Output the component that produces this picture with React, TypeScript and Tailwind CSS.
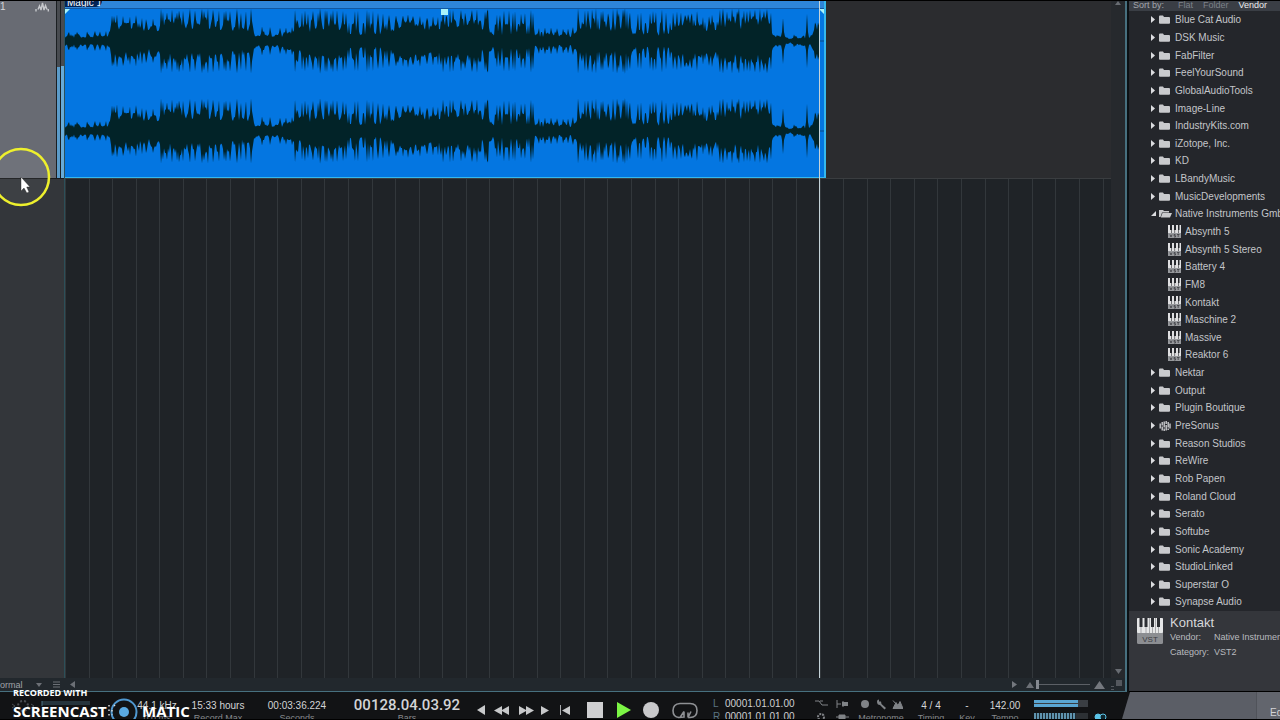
import type { ReactNode } from "react"

type Segment = { from: number; to: number; core: number; peak: number }

// Loudness sections of the audio clip, in clip pixels
const segments: Segment[] = [
  { from: 0, to: 46, core: 5, peak: 10 },
  { from: 46, to: 76, core: 17, peak: 27 },
  { from: 76, to: 96, core: 12, peak: 24 },
  { from: 96, to: 150, core: 18, peak: 33 },
  { from: 150, to: 188, core: 13, peak: 33 },
  { from: 188, to: 229, core: 6, peak: 15 },
  { from: 229, to: 250, core: 13, peak: 32 },
  { from: 250, to: 282, core: 17, peak: 33 },
  { from: 282, to: 318, core: 8, peak: 32 },
  { from: 318, to: 332, core: 13, peak: 28 },
  { from: 332, to: 356, core: 19, peak: 27 },
  { from: 356, to: 374, core: 15, peak: 25 },
  { from: 374, to: 412, core: 19, peak: 32 },
  { from: 412, to: 426, core: 13, peak: 33 },
  { from: 426, to: 470, core: 8, peak: 32 },
  { from: 470, to: 512, core: 6, peak: 14 },
  { from: 512, to: 566, core: 15, peak: 33 },
  { from: 566, to: 608, core: 8, peak: 32 },
  { from: 608, to: 636, core: 18, peak: 30 },
  { from: 636, to: 654, core: 13, peak: 27 },
  { from: 654, to: 707, core: 18, peak: 33 },
  { from: 707, to: 722, core: 5, peak: 7 },
  { from: 722, to: 728, core: 2, peak: 3 },
  { from: 728, to: 749, core: 4, peak: 7 },
  { from: 749, to: 756, core: 15, peak: 20 },
]

const transients = [
  4, 12, 22, 30, 35, 41, 47, 49, 52, 58, 65, 71, 77, 81, 88, 96, 98, 102, 107, 112, 114, 118, 125, 130, 137, 139, 143,
  148, 154, 159, 161, 165, 172, 176, 181, 186, 188, 197, 205, 215, 221, 227, 230, 237, 240, 243, 248, 253, 255, 260,
  262, 266, 268, 272, 278, 281, 290, 293, 302, 304, 308, 313, 318, 324, 331, 338, 343, 348, 355, 362, 368, 373, 378,
  385, 388, 396, 400, 407, 412, 420, 422, 423, 432, 435, 439, 444, 448, 450, 456, 460, 466, 468, 474, 480, 486, 492,
  498, 503, 508, 513, 520, 523, 527, 531, 536, 538, 543, 548, 552, 554, 558, 560, 562, 565, 573, 576, 585, 588, 591,
  597, 601, 608, 612, 616, 620, 623, 627, 632, 638, 644, 647, 655, 658, 662, 667, 672, 674, 679, 682, 685, 690, 695,
  699, 702, 706, 729, 750, 753,
]

const soloHits: Record<number, number> = { 718: 23, 742: 27 }

const noise = (n: number) => {
  const v = Math.sin(n * 12.9898) * 43758.5453
  return v - Math.floor(v)
}

const segmentAt = (x: number) => segments.find((s) => x >= s.from && x < s.to) ?? segments[segments.length - 1]

const coreAt = (x: number) => {
  let sum = 0
  for (let d = -3; d <= 3; d++) sum += segmentAt(Math.max(0, x + d)).core
  return sum / 7
}

const level = (x: number, seed: number) => {
  const { peak } = segmentAt(x)
  const core = coreAt(x) * (0.65 + 0.45 * noise(x * 3 + seed))
  const room = Math.max(0, peak - core)
  if (soloHits[x]) return soloHits[x]
  if (soloHits[x - 1] || soloHits[x + 1]) return 9
  if (transients.includes(x)) return core + room * (0.75 + 0.25 * noise(x))
  if (transients.includes(x - 1) || transients.includes(x + 1)) return core + room * 0.5 * noise(x + 7)
  return noise(x + 31) > 0.75 ? core + room * 0.4 : core
}

const channelPath = (center: number) => {
  const xs = Array.from({ length: 755 }, (_, i) => i)
  const top = xs.map((x) => `L${x} ${(center - level(x, 0)).toFixed(1)}`)
  const bottom = xs.reverse().map((x) => `L${x} ${(center + level(x, 1)).toFixed(1)}`)
  return `M0 ${center}${top.join("")}${bottom.join("")}Z`
}

type Row = { name: string; kind?: "folder" | "open" | "plugin" | "presonus" }

const rows: Row[] = [
  { name: "Blue Cat Audio" },
  { name: "DSK Music" },
  { name: "FabFilter" },
  { name: "FeelYourSound" },
  { name: "GlobalAudioTools" },
  { name: "Image-Line" },
  { name: "IndustryKits.com" },
  { name: "iZotope, Inc." },
  { name: "KD" },
  { name: "LBandyMusic" },
  { name: "MusicDevelopments" },
  { name: "Native Instruments GmbH", kind: "open" },
  { name: "Absynth 5", kind: "plugin" },
  { name: "Absynth 5 Stereo", kind: "plugin" },
  { name: "Battery 4", kind: "plugin" },
  { name: "FM8", kind: "plugin" },
  { name: "Kontakt", kind: "plugin" },
  { name: "Maschine 2", kind: "plugin" },
  { name: "Massive", kind: "plugin" },
  { name: "Reaktor 6", kind: "plugin" },
  { name: "Nektar" },
  { name: "Output" },
  { name: "Plugin Boutique" },
  { name: "PreSonus", kind: "presonus" },
  { name: "Reason Studios" },
  { name: "ReWire" },
  { name: "Rob Papen" },
  { name: "Roland Cloud" },
  { name: "Serato" },
  { name: "Softube" },
  { name: "Sonic Academy" },
  { name: "StudioLinked" },
  { name: "Superstar O" },
  { name: "Synapse Audio" },
]

function Triangle({ dir, className }: { dir: "up" | "down" | "left" | "right"; className: string }) {
  const points = { up: "5,0 10,10 0,10", down: "0,0 10,0 5,10", left: "10,0 10,10 0,5", right: "0,0 10,5 0,10" }[dir]
  return (
    <svg viewBox="0 0 10 10" preserveAspectRatio="none" className={className} fill="currentColor">
      <polygon points={points} />
    </svg>
  )
}

function FolderIcon({ open }: { open?: boolean }) {
  return open ? (
    <svg viewBox="0 0 13 9" className="h-[9px] w-[13px] shrink-0" fill="#c9cacd">
      <path d="M0 1h4l1 1h5v1.500H3L1.500 8H0ZM3.500 4H13l-2 4.500H1.800Z" />
    </svg>
  ) : (
    <svg viewBox="0 0 11 9" className="h-[9px] w-[11px] shrink-0" fill="#c9cacd">
      <path d="M0 1.500Q0 .5 1 .5h3l1 1.500h5q1 0 1 1V8q0 .8-1 .8H1Q0 8.800 0 8Z" />
    </svg>
  )
}

function PresonusIcon() {
  return (
    <svg viewBox="0 0 12 10" className="h-[10px] w-[12px] shrink-0" stroke="#c9cacd" strokeWidth="1.400" fill="none">
      <path d="M1.200 2.500v5M3.200 1v3.500M3.200 5.500v4M5.200.5v6M5.200 7.500V10M7.200 0v3M7.200 4v5.500M9.200 1v5.500M9.200 7.500V9M11 2.500v5" />
    </svg>
  )
}

function PluginIcon() {
  return (
    <svg viewBox="0 0 13 13" className="h-[13px] w-[13px] shrink-0">
      <path d="M0 0h13v8H0Z" fill="#e0e0e2" />
      <path d="M0 8h13v5H0Z" fill="#96989c" />
      <path d="M2 0h2v5H2ZM6 0h2v5H6ZM10 0h1.500v5H10ZM3 5h.6v3H3ZM6.500 5h.6v3h-.6ZM10 5h.6v3H10Z" fill="#24262b" />
      <path d="M2 9.500l1 2.500 1-2.500M7.500 9.500h-1.500v1.200h1.500V12H6M9 9.500h2.500M10.200 9.500V12" stroke="#3c3e43" fill="none" strokeWidth=".8" />
    </svg>
  )
}

function BrowserRow({ name, kind = "folder" }: Row) {
  if (kind === "plugin") {
    return (
      <button className="flex min-h-0 w-full flex-1 items-center gap-1 whitespace-nowrap pl-[39px] text-left">
        <PluginIcon />
        {name}
      </button>
    )
  }
  return (
    <button className="flex min-h-0 w-full flex-1 items-center whitespace-nowrap pl-[21px] text-left">
      <span className="flex w-[9px] shrink-0 pl-px">
        {kind === "open" ? (
          <svg viewBox="0 0 5 5" className="h-[5px] w-[5px]" fill="#dcdde0">
            <path d="M5 0v5H0Z" />
          </svg>
        ) : (
          <Triangle dir="right" className="h-[7px] w-1 text-[#dcdde0]" />
        )}
      </span>
      <span className="flex w-4 shrink-0">
        {kind === "presonus" ? <PresonusIcon /> : <FolderIcon open={kind === "open"} />}
      </span>
      {name}
    </button>
  )
}

function Browser() {
  return (
    <aside className="flex w-[151px] shrink-0 flex-col overflow-hidden border-b border-black bg-[#24262b] text-[10px] text-[#c3c5c9]">
      <div className="flex h-[10px] shrink-0 items-end gap-[10px] whitespace-nowrap bg-[#3a3e45] pl-1 text-[9px] leading-3 text-[#a3a6ac]">
        <span className="mr-1">Sort by:</span>
        <button className="text-[#7d8189]">Flat</button>
        <button className="text-[#7d8189]">Folder</button>
        <button className="text-[#eceded]">Vendor</button>
      </div>
      <div className="flex min-h-0 flex-1 flex-col">
        {rows.map((row) => (
          <BrowserRow key={row.name} {...row} />
        ))}
      </div>
      <div className="flex h-20 shrink-0 gap-[7px] bg-[#34363b] pl-2 pt-[7px]">
        <svg viewBox="0 0 26 26" className="h-[26px] w-[26px] shrink-0">
          <rect width="26" height="26" rx="1.500" fill="#8c8e92" />
          <rect width="26" height="15" rx="1" fill="#e6e7e8" />
          <path d="M2.500 0h3v9h-3ZM7.500 0h3v9h-3ZM14 0h3v9h-3ZM20 0h3v9h-3Z" fill="#2c2e33" />
          <path d="M4 9v6M9 9v6M12.500 0v15M18.500 0v15M15.500 9v6M21.500 9v6" stroke="#8c8e92" strokeWidth=".7" />
          <text x="13" y="23.500" textAnchor="middle" fontSize="8" fill="#3b3d42">VST</text>
        </svg>
        <div className="whitespace-nowrap text-[9px] leading-[15px] text-[#b9bbbf]">
          <h2 className="-mt-0.5 text-[13px] leading-[14px] text-[#d6d7da]">Kontakt</h2>
          <div className="grid grid-cols-[44px_auto]">
            <span>Vendor:</span>
            <span>Native Instruments</span>
            <span>Category:</span>
            <span>VST2</span>
          </div>
        </div>
      </div>
    </aside>
  )
}

function TrackHeader() {
  return (
    <div className="flex h-[178px] border-b border-[#1a1b1d] bg-[#686b73]">
      <div className="flex flex-1 justify-between pr-[7px] text-[10px] leading-3 text-[#d4d5d8]">
        <span>1</span>
        <svg viewBox="0 0 14 10" className="mt-px h-[10px] w-[14px]" stroke="#c6c8cc" strokeWidth="1.400" fill="none">
          <path d="M1 9.500V7M3 7.500L4.500 4 6 8M6 8l1.500-7L9 8M9 8l1.500-4.500L12 7.500M13.300 7v2.500" />
        </svg>
      </div>
      <div className="flex w-2 items-end gap-px bg-[#1b1f22] pl-px">
        <div className="flex h-full flex-1 items-end bg-[#484b50]">
          <div className="h-[111px] w-full bg-[#5c9cca]" />
        </div>
        <div className="flex h-full flex-1 items-end bg-[#484b50]">
          <div className="h-[112px] w-full bg-[#68abd8]" />
        </div>
      </div>
    </div>
  )
}

function GridLines() {
  return (
    <svg className="h-full w-full" fill="#32373b">
      {Array.from({ length: 100 }, (_, i) => (
        <rect key={i} x={Math.round(i * 23.58)} width="1" height="100%" />
      ))}
    </svg>
  )
}

function AudioClip() {
  return (
    <div className="flex h-full w-[761px] flex-col border-b border-r-2 border-[#35b8ee] bg-[#0476e1]">
      <div className="h-[8px] shrink-0 overflow-hidden border-b border-[#1257a0] bg-[#2e85d9]">
        <span className="block h-[6px] w-[37px] overflow-hidden whitespace-nowrap rounded-br-md bg-[#032456] pl-0.5 text-[10px] leading-[3px] text-white">
          Magic 1
        </span>
      </div>
      <svg viewBox="0 0 759 168" className="h-[168px] w-[759px]">
        <path d={channelPath(32)} fill="#022328" />
        <path d={channelPath(122)} fill="#022328" />
        <path d="M755 32h4M755 122h4" stroke="#0a4a86" />
        <path d="M0 0h5L0 5ZM754 0h5v5Z" fill="#a9f3fa" />
        <rect x="376" width="7" height="6" fill="#a9f3fa" />
      </svg>
    </div>
  )
}

function Timeline() {
  return (
    <div className="relative min-w-0 flex-1 overflow-hidden border-l border-[#2c5059] bg-[#1f2327]">
      <div className="h-[178px] border-b border-[#3a3d40] bg-[#2b2c2f]">
        <AudioClip />
      </div>
      <div className="absolute inset-x-0 bottom-0 top-[178px]">
        <GridLines />
      </div>
      <div className="absolute inset-y-0 left-[754px] w-px bg-[#c4d2d8]" />
    </div>
  )
}

function ScrollBar() {
  return (
    <div className="flex h-[13px] shrink-0 items-center bg-[#22282d] pr-[3px] text-[9px] text-[#a0a3a8]">
      <button className="flex w-[42px] items-center justify-between leading-3">
        ormal
        <Triangle dir="down" className="h-1 w-[6px] text-[#6c7076]" />
      </button>
      <svg viewBox="0 0 7 7" className="ml-[11px] h-[7px] w-[7px]" stroke="#6c7076">
        <path d="M0 1h7M0 3.500h7M0 6h7" />
      </svg>
      <button aria-label="Scroll left" className="ml-[10px]">
        <Triangle dir="left" className="h-[7px] w-[5px] text-[#6c7076]" />
      </button>
      <div className="flex-1" />
      <button aria-label="Scroll right">
        <Triangle dir="right" className="h-[7px] w-[5px] text-[#74787e]" />
      </button>
      <Triangle dir="up" className="ml-[9px] h-[6px] w-2 text-[#6c7076]" />
      <input
        type="range"
        aria-label="Horizontal zoom"
        defaultValue={0}
        className="mx-0.5 h-[9px] w-[54px] appearance-none bg-[linear-gradient(#5c6066,#5c6066)] bg-[length:100%_1px] bg-center bg-no-repeat [&::-webkit-slider-thumb]:h-[9px] [&::-webkit-slider-thumb]:w-[3px] [&::-webkit-slider-thumb]:appearance-none [&::-webkit-slider-thumb]:bg-[#858990]"
      />
      <Triangle dir="up" className="ml-0.5 h-2 w-[11px] text-[#74787e]" />
      <svg viewBox="0 0 11 10" className="ml-[6px] h-[10px] w-[11px]" fill="#54585e">
        <path d="M5 0h6v6H5ZM0 6h3v1H0ZM0 9h3v1H0Z" />
      </svg>
    </div>
  )
}

function Arranger() {
  return (
    <section className="flex min-w-0 flex-1 flex-col border-b border-r-2 border-[#47707f]">
      <div className="flex min-h-0 flex-1">
        <div className="w-16 shrink-0 bg-[#33363a]">
          <TrackHeader />
        </div>
        <Timeline />
        <div className="flex w-[14px] shrink-0 flex-col items-center justify-between bg-[#26292d] pb-1 text-[#686c72]">
          <Triangle dir="up" className="h-1 w-[6px]" />
          <Triangle dir="down" className="h-[5px] w-[7px]" />
        </div>
      </div>
      <ScrollBar />
    </section>
  )
}

function Readout({ value, label, className }: { value: string; label: string; className: string }) {
  return (
    <div className={`flex shrink-0 flex-col items-center whitespace-nowrap ${className}`}>
      <span className="leading-[17px] text-[#d3d4d6]">{value}</span>
      <span className="font-['Liberation_Sans',Arial,sans-serif] text-[9px] font-normal leading-[9px] text-[#85888c]">
        {label}
      </span>
    </div>
  )
}

function TransportButton({ label, className, children }: { label: string; className: string; children: ReactNode }) {
  return (
    <button aria-label={label} className={`mt-1 flex h-[18px] shrink-0 items-center justify-center ${className}`}>
      {children}
    </button>
  )
}

function Transport() {
  return (
    <div className="flex min-w-0 flex-1 overflow-hidden bg-[#121315] pt-[5px] text-[10px]">
      <div className="w-[127px] shrink-0 pl-3">
        <svg viewBox="0 0 84 20" className="h-5 w-[84px]" fill="none" stroke="#4a4d52">
          <circle cx="11" cy="9" r="5" strokeDasharray="2 2" strokeWidth="2" />
          <path d="M0 7l3 2-3 2M19 7l3 2-3 2" />
          <path d="M30 6h48" stroke="#26343c" strokeWidth="4" />
          <path d="M30 4v5" stroke="#4b7286" />
        </svg>
      </div>
      <Readout value="44.1 kHz" label="0.0 ms" className="w-[60px]" />
      <Readout value="15:33 hours" label="Record Max" className="w-[62px]" />
      <Readout value="00:03:36.224" label="Seconds" className="w-[96px]" />
      <Readout
        value="00128.04.03.92"
        label="Bars"
        className="w-[124px] font-[Roboto,sans-serif] text-[15px] font-medium"
      />
      <div className="flex shrink-0 text-[#c8c9cb]">
        <TransportButton label="Previous marker" className="w-6">
          <Triangle dir="left" className="h-[10px] w-2" />
        </TransportButton>
        <TransportButton label="Rewind" className="w-4">
          <Triangle dir="left" className="h-[9px] w-2 shrink-0" />
          <Triangle dir="left" className="-ml-px h-[9px] w-2 shrink-0" />
        </TransportButton>
        <TransportButton label="Forward" className="ml-2 w-[18px]">
          <Triangle dir="right" className="h-[9px] w-2" />
          <Triangle dir="right" className="-ml-px h-[9px] w-2" />
        </TransportButton>
        <TransportButton label="Next marker" className="ml-1 w-3">
          <Triangle dir="right" className="h-[9px] w-2" />
        </TransportButton>
        <TransportButton label="Return to zero" className="w-7">
          <span className="mr-px h-[10px] w-px bg-[#a9abae]" />
          <Triangle dir="left" className="h-[9px] w-2" />
        </TransportButton>
        <TransportButton label="Stop" className="w-8">
          <span className="h-4 w-4 bg-[#cfcfd1]" />
        </TransportButton>
        <TransportButton label="Play" className="w-[26px]">
          <Triangle dir="right" className="h-4 w-[14px] text-[#7cf545]" />
        </TransportButton>
        <TransportButton label="Record" className="w-7">
          <span className="h-4 w-4 rounded-full bg-[#c9c9cb]" />
        </TransportButton>
        <TransportButton label="Loop" className="w-10">
          <svg viewBox="0 0 26 17" className="h-[17px] w-[26px]" fill="none" stroke="#8e9094" strokeWidth="1.600">
            <path d="M7 15.500Q1 15 1 8.500T8 1.500h10Q25 1.500 25 8.500T18 15.500H16M6 15.500L12 15 12 9.500M12 9.500L8 15.500M16 15.500L19 9.500M16 15.500v-5" />
          </svg>
        </TransportButton>
      </div>
      <div className="ml-2 grid w-[102px] shrink-0 grid-cols-[12px_auto] content-start leading-[13px] text-[#cfd0d2]">
        <span className="text-[#5a7382]">L</span>
        <span>00001.01.01.00</span>
        <span className="text-[#5a7382]">R</span>
        <span>00001.01.01.00</span>
      </div>
      <svg viewBox="0 0 34 23" className="h-[23px] w-[34px] shrink-0" fill="#808387" stroke="#808387">
        <path d="M0 4h4l3 4h6M5 4h3M22 3v8M22 7h4M28 4v6M29 7h4" fill="none" />
        <path d="M27 5h6v4h-6Z" stroke="none" />
        <circle cx="6" cy="20" r="3" fill="none" strokeWidth="2" strokeDasharray="2 1" />
        <path d="M21 20h13M24 18h6v4h-6Z" />
      </svg>
      <div className="ml-1 flex w-[56px] shrink-0 flex-col items-center">
        <svg viewBox="0 0 44 17" className="h-[17px] w-[44px] shrink-0" fill="#808387">
          <circle cx="6" cy="7" r="4" />
          <path d="M18 4.500q0-2 2-2v2h2l.5 2.500L27 11l-1.500 1.500L21 8q-3 0-3-3.500Z" />
          <path d="M34 11.500l3-6 2 3 2-4 3 7ZM34 3.500l6 7" stroke="#808387" />
        </svg>
        <span className="text-[9px] leading-[9px] text-[#85888c]">Metronome</span>
      </div>
      <Readout value="4 / 4" label="Timing" className="ml-[2px] w-[40px]" />
      <Readout value="-" label="Key" className="w-[32px]" />
      <Readout value="142.00" label="Tempo" className="w-[44px]" />
      <div className="ml-[7px] w-[54px] shrink-0 pt-[3px]">
        <div className="h-[7px] bg-[#3a3e43]">
          <div className="flex h-full w-[44px] flex-col gap-px">
            <div className="flex-1 bg-[#5aa6d3]" />
            <div className="flex-1 bg-[#5aa6d3]" />
          </div>
        </div>
        <div className="mt-[6px] h-[7px] bg-[#2c3034]">
          <div className="h-full w-[42px] bg-[repeating-linear-gradient(90deg,#5f93ae_0_2px,#1c2a32_2px_3px)]" />
        </div>
      </div>
      <svg viewBox="0 0 14 10" className="ml-[6px] mt-4 h-[10px] w-[14px] shrink-0" stroke="#5cc4e8">
        <circle cx="4" cy="4" r="3" fill="#5cc4e8" />
        <circle cx="9" cy="4" r="3" fill="#10282f" />
      </svg>
    </div>
  )
}

function Watermark() {
  return (
    <div className="absolute bottom-0 left-[13px] font-['Open_Sans',sans-serif] font-bold text-white">
      <div className="text-[9px] leading-[10px]">RECORDED WITH</div>
      <div className="flex h-[21px] overflow-hidden text-[15px] leading-[26px]">
        <span className="w-[95px]">SCREENCAST</span>
        <svg viewBox="0 0 30 22" className="h-[22px] w-[30px]" fill="none">
          <circle cx="16" cy="14" r="12.500" stroke="#4f97cf" strokeWidth="2" />
          <circle cx="16" cy="14" r="5" fill="#5aa9e2" />
          <path d="M1 7v12M6 7l1 1M4 12v5" stroke="#d9dcdf" strokeWidth="1.500" strokeDasharray="1.500 3" />
        </svg>
        <span className="pl-1">MATIC</span>
      </div>
    </div>
  )
}

function Pointer() {
  return (
    <svg viewBox="0 0 60 60" className="pointer-events-none absolute left-[-9px] top-[146px] h-[60px] w-[60px]">
      <circle cx="30" cy="30" r="28" fill="#ffffff" fillOpacity=".05" stroke="#eef02d" strokeWidth="2.500" />
      <path d="M30 30v14l3-3 2.800 5 2.200-1-2.300-5H39Z" fill="#fff" stroke="#222" strokeWidth=".4" />
    </svg>
  )
}

export default function App() {
  return (
    <div className="relative flex h-screen flex-col overflow-hidden border-y border-black bg-[#0b1114] font-['Liberation_Sans',Arial,sans-serif]">
      <main className="flex min-h-0 flex-1 gap-0.5">
        <Arranger />
        <Browser />
      </main>
      <footer className="flex h-[27px] shrink-0 bg-[#121315]">
        <Transport />
        <div className="flex w-[158px] shrink-0 justify-end bg-[#5b5e66] text-[10px] leading-3 text-[#d3d4d6] [clip-path:polygon(8px_0,100%_0,100%_100%,0_100%)]">
          <button className="flex w-[24px] items-end border-l border-[#50535a] bg-[#62656d] pl-[13px]">Edit</button>
        </div>
      </footer>
      <Watermark />
      <Pointer />
    </div>
  )
}
